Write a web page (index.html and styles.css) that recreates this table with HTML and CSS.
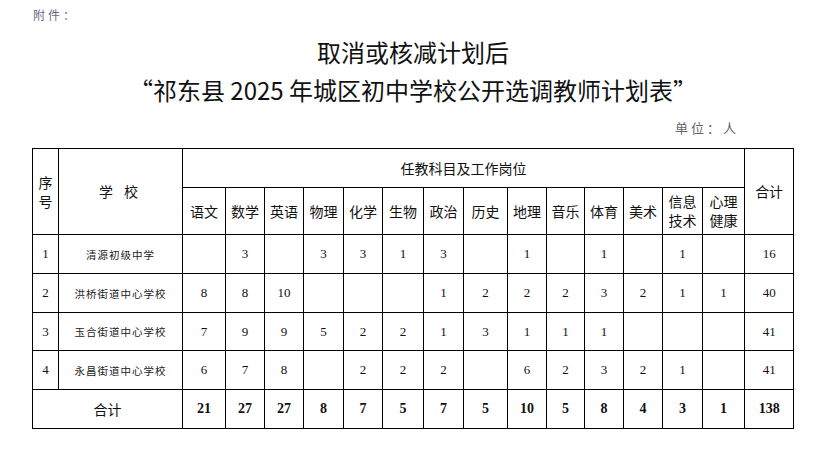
FILE: index.html
```html
<!DOCTYPE html>
<html lang="zh">
<head>
<meta charset="utf-8">
<link rel="stylesheet" href="styles.css">
</head>
<body>
<div class="page">
  <div class="attach">附件：</div>
  <div class="title">
    <div>取消或核减计划后</div>
    <div>“祁东县 2025 年城区初中学校公开选调教师计划表”</div>
  </div>
  <div class="unit">单位：人</div>
  <table class="plan">
    <colgroup>
      <col style="width:26px"><col style="width:124px">
      <col style="width:43px"><col style="width:39px"><col style="width:39px"><col style="width:40px">
      <col style="width:39px"><col style="width:41px"><col style="width:40px"><col style="width:44px">
      <col style="width:39px"><col style="width:38px"><col style="width:39px"><col style="width:39px">
      <col style="width:40px"><col style="width:42px"><col style="width:49px">
    </colgroup>
    <tr class="h1">
      <td rowspan="2" class="hd">序号</td>
      <td rowspan="2" class="hd sp">学 校</td>
      <td colspan="14" class="hd">任教科目及工作岗位</td>
      <td rowspan="2" class="hd">合计</td>
    </tr>
    <tr class="h2">
      <td class="hd">语文</td><td class="hd">数学</td><td class="hd">英语</td><td class="hd">物理</td>
      <td class="hd">化学</td><td class="hd">生物</td><td class="hd">政治</td><td class="hd">历史</td>
      <td class="hd">地理</td><td class="hd">音乐</td><td class="hd">体育</td><td class="hd">美术</td>
      <td class="hd">信息技术</td><td class="hd">心理健康</td>
    </tr>
    <tr class="r">
      <td>1</td><td class="school">清源初级中学</td>
      <td></td><td>3</td><td></td><td>3</td><td>3</td><td>1</td><td>3</td><td></td><td>1</td><td></td><td>1</td><td></td><td>1</td><td></td><td>16</td>
    </tr>
    <tr class="r">
      <td>2</td><td class="school">洪桥街道中心学校</td>
      <td>8</td><td>8</td><td>10</td><td></td><td></td><td></td><td>1</td><td>2</td><td>2</td><td>2</td><td>3</td><td>2</td><td>1</td><td>1</td><td>40</td>
    </tr>
    <tr class="r r3">
      <td>3</td><td class="school">玉合街道中心学校</td>
      <td>7</td><td>9</td><td>9</td><td>5</td><td>2</td><td>2</td><td>1</td><td>3</td><td>1</td><td>1</td><td>1</td><td></td><td></td><td></td><td>41</td>
    </tr>
    <tr class="r">
      <td>4</td><td class="school">永昌街道中心学校</td>
      <td>6</td><td>7</td><td>8</td><td></td><td>2</td><td>2</td><td>2</td><td></td><td>6</td><td>2</td><td>3</td><td>2</td><td>1</td><td></td><td>41</td>
    </tr>
    <tr class="r total">
      <td colspan="2" class="hd">合计</td>
      <td>21</td><td>27</td><td>27</td><td>8</td><td>7</td><td>5</td><td>7</td><td>5</td><td>10</td><td>5</td><td>8</td><td>4</td><td>3</td><td>1</td><td>138</td>
    </tr>
  </table>
</div>
</body>
</html>
```
FILE: styles.css
```css
html, body {
  margin: 0;
  padding: 0;
  background: #fff;
}
.page {
  width: 762px;
  margin-left: 32px;
  font-family: "Noto Sans CJK SC", "Liberation Sans", sans-serif;
  color: #000;
}
.attach {
  padding-top: 5px;
  height: 20px;
  line-height: 20px;
  font-size: 12px;
  color: #6a6a80;
  letter-spacing: 3px;
  margin-left: 1px;
}
.title {
  margin-top: 8px;
  text-align: center;
  font-size: 24px;
  line-height: 38px;
  color: #111;
}
.unit {
  margin-top: 9px;
  height: 20px;
  line-height: 20px;
  text-align: right;
  padding-right: 55px;
  font-size: 13px;
  color: #666;
  letter-spacing: 3px;
}
.plan {
  margin-top: 10px;
  border-collapse: collapse;
  table-layout: fixed;
  width: 762px;
}
.plan td {
  border: 1px solid #000;
  padding: 0;
  text-align: center;
  vertical-align: middle;
  font-family: "Liberation Serif", serif;
  font-size: 13px;
  color: #111;
}
.plan td.hd {
  font-family: "Noto Sans CJK SC", "Liberation Sans", sans-serif;
  font-size: 14px;
  line-height: 19px;
}
.plan td.sp {
  letter-spacing: 4px;
}
.plan td.school {
  font-family: "Noto Sans CJK SC", "Liberation Sans", sans-serif;
  font-size: 10.5px;
  letter-spacing: 1px;
  color: #222;
}
.h1 { height: 39px; }
.h2 { height: 47px; }
.r { height: 39px; }
.r3 { height: 38px; }
.total td {
  font-weight: bold;
  font-size: 14px;
}
.total td.hd {
  font-weight: normal;
}
```
